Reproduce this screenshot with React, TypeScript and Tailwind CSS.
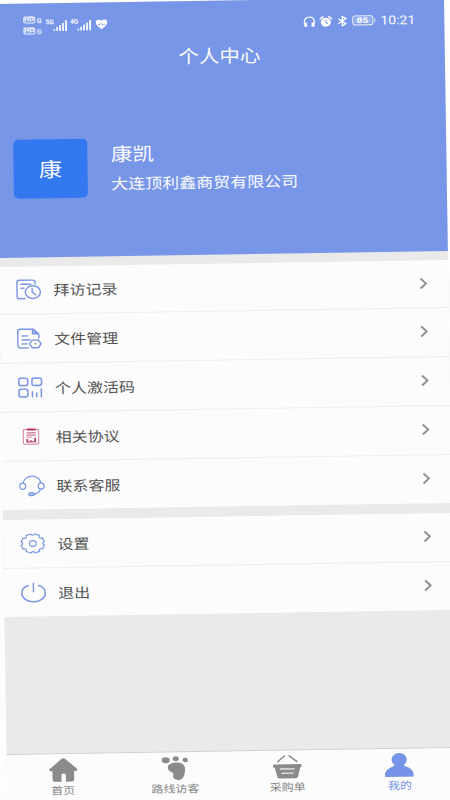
import React from "react"

const iconClass = "w-[25px] h-5 shrink-0 overflow-visible"

function RecordIcon() {
  return (
    <svg className={iconClass} viewBox="0 0 76 60" fill="none" stroke="#7c98e4" strokeWidth={4.4} strokeLinecap="round" preserveAspectRatio="none">
      <path d="M57 14V8q0-6-7-6H9Q2 2 2 9v42q0 6 7 6h17" />
      <path d="M14 14h30M14 26h9" />
      <ellipse cx="50" cy="38" rx="23" ry="19" />
      <path d="M48 27v11l11 8" />
    </svg>
  )
}

function FileIcon() {
  return (
    <svg className={iconClass} viewBox="0 0 76 60" fill="none" stroke="#7c98e4" strokeWidth={4.4} strokeLinecap="round" strokeLinejoin="round" preserveAspectRatio="none">
      <path d="M66 28V17L49 2H10Q2 2 2 9v41q0 8 8 8h24" />
      <path d="M47 3v13h17z" fill="#a9bdf0" />
      <path d="M15 22h17M15 34h24M15 46h15" />
      <path d="M46 35h18l9 11-9 12H46l-9-12z" />
      <ellipse cx="55" cy="46" rx="2" ry="1.5" fill="#7c98e4" strokeWidth={2} />
    </svg>
  )
}

function CodeIcon() {
  return (
    <svg className={iconClass} viewBox="0 0 76 60" fill="none" stroke="#7c98e4" strokeWidth={4.8} strokeLinecap="round" preserveAspectRatio="none">
      <rect x="3" y="2" width="27" height="22" rx="6" />
      <rect x="43" y="2" width="29" height="22" rx="6" />
      <rect x="3" y="35" width="27" height="23" rx="6" />
      <path d="M44 43v15M57 47v11M71 35v23" />
    </svg>
  )
}

function AgreementIcon() {
  return (
    <svg className={iconClass} viewBox="0 0 76 60" fill="none" stroke="#c0527f" strokeWidth={3} preserveAspectRatio="none">
      <path d="M24 9H17q-3 0-3 3v37q0 4 4 4h39q4 0 4-4V12q0-3-3-3h-7" stroke="#cf7d9c" />
      <path d="M25 9h27" strokeWidth={6} stroke="#b93367" />
      <path d="M24 19h28M24 26h28" />
      <path d="M24 32h16" stroke="#d58ba8" />
      <path d="M26 37v9M37 41v5M50 34v12" strokeWidth={5} stroke="#b93367" />
      <path d="M24 46h29" stroke="#b93367" />
    </svg>
  )
}

function SupportIcon() {
  return (
    <svg className={iconClass} viewBox="0 0 76 60" fill="none" stroke="#7c98e4" strokeWidth={3.6} strokeLinecap="round" preserveAspectRatio="none">
      <path d="M11 21C17 7 28 2 39 2c10 0 15 3 20 8" />
      <path d="M61 12l4 9" />
      <ellipse cx="10" cy="32" rx="9" ry="9.5" />
      <ellipse cx="66" cy="32" rx="9" ry="9.5" />
      <path d="M64 42q-6 12-18 14" />
      <ellipse cx="37" cy="56" rx="9" ry="4.5" fill="#b6c6f2" />
    </svg>
  )
}

function SettingsIcon() {
  return (
    <svg className={iconClass} viewBox="0 0 76 60" fill="none" stroke="#7c98e4" strokeWidth={3.6} strokeLinejoin="round" preserveAspectRatio="none">
      <path d="M44.6 1.5L58.4 6.1Q54.8 16.5 67.7 13.6L73.4 24.7Q64 30 73.4 35.3L67.7 46.4Q54.8 43.5 58.4 53.9L44.6 58.5Q38 50.9 31.4 58.5L17.6 53.9Q21.2 43.5 8.3 46.4L2.6 35.3Q12 30 2.6 24.7L8.3 13.6Q21.2 16.5 17.6 6.1L31.4 1.5Q38 9.1 44.6 1.5z" />
      <ellipse cx="38" cy="30" rx="10.5" ry="8.5" />
    </svg>
  )
}

function PowerIcon() {
  return (
    <svg className={iconClass} viewBox="0 0 76 60" fill="none" stroke="#7c98e4" strokeWidth={4.6} strokeLinecap="round" preserveAspectRatio="none">
      <path d="M22 9C9 13 2 22 2 32c0 14 16 26 36 26s36-12 36-26c0-10-7-19-20-23" />
      <path d="M38 2v25" />
    </svg>
  )
}

function HomeIcon() {
  return (
    <svg className="w-[29px] h-6" viewBox="0 0 87 72" fill="#8b8b8b" preserveAspectRatio="none">
      <path d="M38 3q6-5 12 0l34 29q5 6-2 7h-6v26q0 6-6 6H51V50q0-3-3-3H41q-3 0-3 3v21H17q-6 0-6-6V39H5q-7-1-2-7z" />
    </svg>
  )
}

function FootIcon() {
  return (
    <svg className="w-[27px] h-6" viewBox="0 0 80 70" fill="#8b8b8b" preserveAspectRatio="none">
      <ellipse cx="12" cy="11" rx="12" ry="9" />
      <ellipse cx="42" cy="7" rx="9" ry="7" />
      <ellipse cx="70" cy="11" rx="8" ry="6.5" />
      <path d="M18 34C17 24 28 18 44 18c17 0 26 8 25 21-1 17-5 30-19 30-13 0-19-6-16-15 2-5-1-6-5-8-5-2-11-6-11-12z" />
    </svg>
  )
}

function BasketIcon() {
  return (
    <svg className="w-[29px] h-6" viewBox="0 0 88 72" fill="#8b8b8b" preserveAspectRatio="none">
      <path d="M15 21L36 4M73 21L50 4" stroke="#8b8b8b" strokeWidth={4.5} strokeLinecap="round" />
      <path d="M4 29h80q4 0 4 5t-5 5l-6 26q-2 7-8 7H21q-7 0-8-7L6 39q-6 0-6-5t4-5z" />
      <path d="M23 43h42M27 56h34" stroke="#e8e8e8" strokeWidth={4} strokeLinecap="round" />
    </svg>
  )
}

function UserIcon() {
  return (
    <svg className="w-[29px] h-6" viewBox="0 0 88 72" fill="#7795e8" preserveAspectRatio="none">
      <ellipse cx="44" cy="20" rx="23" ry="20" />
      <path d="M30 35h28q1 5 8 7c13 4 22 14 22 26 0 3-1 4-4 4H4c-3 0-4-1-4-4 0-12 9-22 22-26q7-2 8-7z" />
    </svg>
  )
}

const groups = [
  [
    { label: "拜访记录", icon: RecordIcon },
    { label: "文件管理", icon: FileIcon },
    { label: "个人激活码", icon: CodeIcon },
    { label: "相关协议", icon: AgreementIcon },
    { label: "联系客服", icon: SupportIcon },
  ],
  [
    { label: "设置", icon: SettingsIcon },
    { label: "退出", icon: PowerIcon },
  ],
]

const tabs = [
  { label: "首页", icon: HomeIcon },
  { label: "路线访客", icon: FootIcon },
  { label: "采购单", icon: BasketIcon },
  { label: "我的", icon: UserIcon, active: true },
]

function HdBadge({ sim }: { sim: string }) {
  return (
    <div className="flex items-end gap-[2px] h-[7px]">
      <span className="flex items-center justify-center w-3 h-[7px] rounded-[2px] border border-white/90 text-[7px] leading-none font-bold">
        <span className="scale-x-[1.05] scale-y-[0.9]">HD</span>
      </span>
      <span className="flex items-center justify-center w-[4px] h-[5px] rounded-[1px] bg-white/75 text-[#7896e8] text-[5px] leading-none font-bold">
        {sim}
      </span>
    </div>
  )
}

function Signal({ type }: { type: string }) {
  return (
    <div className="flex items-start">
      <span className="w-[7px] mt-[-0.5px] text-[6.5px] leading-[6px] tracking-[-0.3px] font-bold">{type}</span>
      <svg className="w-[14px] h-[11px]" viewBox="0 0 14 11" fill="#f4f7ff">
        <rect x="0" y="9" width="1.7" height="2" />
        <rect x="2.9" y="7" width="1.7" height="4" />
        <rect x="5.8" y="5" width="1.8" height="6" />
        <rect x="8.8" y="3" width="1.8" height="8" />
        <rect x="11.8" y="0.3" width="1.9" height="10.7" />
      </svg>
    </div>
  )
}

function StatusBar() {
  return (
    <div className="flex items-center justify-between h-[44px] pl-7 pr-[29px] font-[Roboto,sans-serif]">
      <div className="flex items-center">
        <div className="flex flex-col gap-[4px]">
          <HdBadge sim="1" />
          <HdBadge sim="2" />
        </div>
        <div className="flex gap-[3.5px] ml-[4.5px]">
          <Signal type="5G" />
          <Signal type="4G" />
        </div>
        <svg className="w-[12.5px] h-[10px] ml-[4px]" viewBox="0 0 24 20" fill="none">
          <path d="M12 20L3 12C-1 7 0 1 6 0q4 0 6 3 2-3 6-3c6 1 7 7 3 12z" fill="#fff" />
          <path d="M5 10h4l2-2 3 4 2-2h3" stroke="#7896e8" strokeWidth="1.8" />
        </svg>
      </div>
      <div className="flex items-center">
        <svg className="w-3 h-[11px]" viewBox="0 0 24 22" fill="none" stroke="#fff" strokeWidth="2.4">
          <path d="M2 15v-3C2 6 6 2 12 2s10 4 10 10v3" />
          <path d="M2 13h5v8H4q-2 0-2-2zM22 13h-5v8h3q2 0 2-2z" fill="#fff" strokeWidth="1" />
        </svg>
        <svg className="w-[13px] h-[11px] ml-[4.5px]" viewBox="0 0 26 22" fill="none">
          <ellipse cx="13" cy="12.5" rx="10" ry="9" fill="#fff" />
          <path d="M1.5 6L7 1.5M24.5 6L19 1.5" stroke="#fff" strokeWidth="3" strokeLinecap="round" />
          <path d="M13 7v6l4 3" stroke="#7896e8" strokeWidth="2" />
        </svg>
        <svg className="w-[10px] h-[11px] ml-[4.5px]" viewBox="0 0 20 22" fill="none" stroke="#fff" strokeWidth="2.6">
          <path d="M2 6l15 10-7 4.5V1.5L17 6 2 16" />
        </svg>
        <div className="flex items-center ml-[5px]">
          <div className="flex items-center justify-center w-[21px] h-[10.5px] p-px rounded-[3px] border border-white/90">
            <span className="flex items-center justify-center w-full h-full bg-white/25 text-[9px] leading-none font-bold">
              <span className="scale-x-[1.15] scale-y-[0.85]">85</span>
            </span>
          </div>
          <div className="w-[1.5px] h-1 ml-[1px] bg-white/80" />
        </div>
        <span className="ml-[5px] text-[14px] leading-none scale-y-[0.87]">10:21</span>
      </div>
    </div>
  )
}

function Header() {
  return (
    <header className="h-[253.5px] bg-[#7896e8] text-[#fafcff]">
      <StatusBar />
      <h1 className="mt-[-1px] pr-[2px] text-center text-[20.5px] leading-[23px] scale-y-[0.87]">个人中心</h1>
      <div className="flex mt-[69.5px] ml-[16px]">
        <div className="flex items-center justify-center w-[73.5px] h-[59px] rounded-[5px] bg-[#3478f1]">
          <span className="text-[23px] leading-none scale-y-[0.87]">康</span>
        </div>
        <div className="flex flex-col ml-[24px] mt-[4.5px]">
          <span className="text-[21.5px] leading-[22px] scale-y-[0.87]">康凯</span>
          <span className="mt-[9px] text-[17px] leading-[20px] scale-y-[0.87]">大连顶利鑫商贸有限公司</span>
        </div>
      </div>
    </header>
  )
}

export default function App() {
  return (
    <div className="w-[450px] h-[800px] overflow-hidden bg-[#fdfdfd] font-['Noto_Sans_CJK_SC',sans-serif]">
      <div className="flex flex-col w-[449px] h-[812px] ml-[-5.3px] translate-y-[4px] origin-top-left rotate-[-0.88deg] bg-[#eaeaea]">
        <Header />
        <main className="flex flex-col gap-[9.5px] pt-[9px] grow">
          {groups.map((group, i) => (
            <section key={i} className="bg-[#fcfcfc]">
              {group.map(({ label, icon: Icon }, j) => (
                <div
                  key={label}
                  className={`flex items-center h-[48.75px] pl-[17px] pr-[21.5px] ${j < group.length - 1 ? "border-b border-[#eeeeee]" : ""}`}
                >
                  <Icon />
                  <span className="ml-[12px] text-[16px] leading-5 text-[#545454] scale-y-[0.87]">{label}</span>
                  <svg className="w-2 h-3 ml-auto mb-[1.5px]" viewBox="0 0 8 12" fill="none" stroke="#8e8e8e" strokeWidth="1.9">
                    <path d="M1.2 1l5.4 5-5.4 5" />
                  </svg>
                </div>
              ))}
            </section>
          ))}
        </main>
        <nav className="grid grid-cols-4 h-[62px] border-t border-[#cfcfcf] bg-[#fcfcfc]">
          {tabs.map(({ label, icon: Icon, active }) => (
            <div key={label} className={`flex flex-col items-center pt-[4px] ${active ? "text-[#7795e8]" : "text-[#858585]"}`}>
              <Icon />
              <span className="mt-px text-[12px] leading-[14px] scale-y-[0.87]">{label}</span>
            </div>
          ))}
        </nav>
      </div>
    </div>
  )
}
